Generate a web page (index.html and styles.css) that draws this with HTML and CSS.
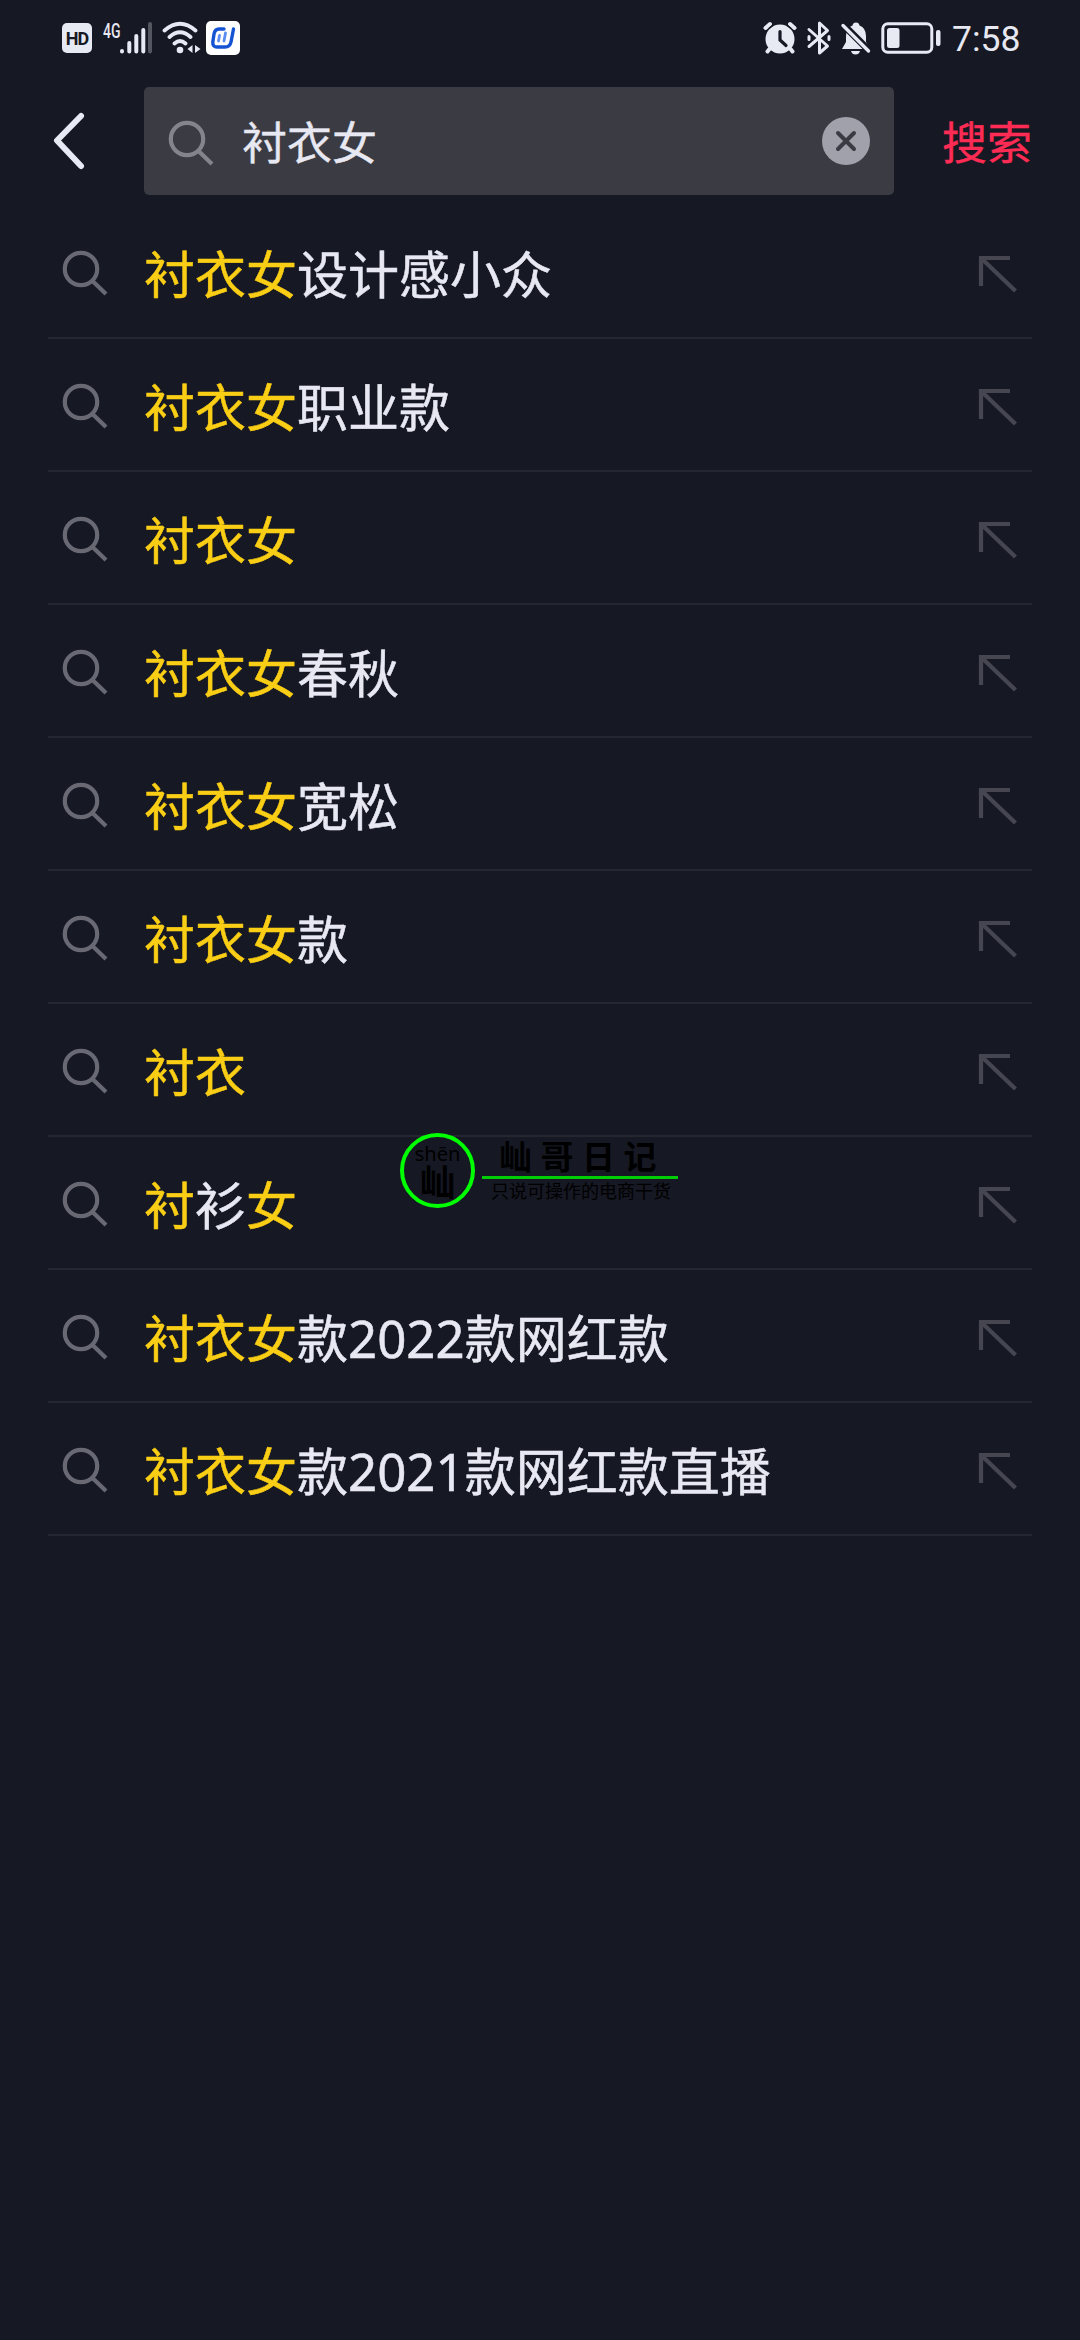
FILE: index.html
```html
<!DOCTYPE html>
<html lang="zh-CN">
<head>
<meta charset="utf-8">
<title>搜索</title>
<link rel="stylesheet" href="styles.css">
</head>
<body>
<svg class="defs" aria-hidden="true">
  <symbol id="search" viewBox="0 0 48 48"><circle cx="20" cy="20" r="16.2"/><path d="M31 31.5 45 45"/></symbol>
  <symbol id="fill" viewBox="0 0 40 40"><path d="M4 33V5H33M5 6 38.500 38"/></symbol>
</svg>
<div class="screen">
  <header class="status">
    <div class="status-left">
      <span class="hd">HD</span>
      <span class="net">4G</span>
      <svg class="signal" width="32" height="34" viewBox="0 0 32 34"><path d="M2 30v.5M9.300 22v8.500M16.300 15v15.500M23.300 9v21.500"/><path class="dim" d="M30 3v27.500"/></svg>
      <svg class="wifi" width="40" height="34" viewBox="0 0 40 34"><path d="M3.500 9.500Q19 -4 34.500 9.500M8.500 16Q19 6.500 29.500 16M13.500 22.500Q19 17.500 24.500 22.500"/><circle cx="19" cy="29" r="3.300"/><path class="solid" d="M31.500 24v8l-5-4zM34 24v8l5.500-4z"/></svg>
      <svg class="app" width="34" height="34" viewBox="0 0 34 34"><rect width="34" height="34" rx="5" fill="#fff"/><g fill="none" stroke="#1453d2" stroke-width="3.400" stroke-linecap="round"><path d="M18 8h-5Q9 8 8 13L6.800 21Q6.500 26 11 26h8Q24 26 25 21L27.500 8"/><path stroke="#5b8df0" stroke-width="2.800" d="M13.500 14.500 12.500 20M19.500 12 18 20"/></g></svg>
    </div>
    <div class="status-right">
      <svg width="34" height="34" viewBox="0 0 34 34"><circle cx="17" cy="18" r="14.500" fill="#e7e9f3"/><g fill="none" stroke="#e7e9f3" stroke-width="4" stroke-linecap="round"><path d="M2.500 7 7 3M27 3l4.500 4M6.500 28 4.500 30.500M27.500 28l2 2.500"/></g><path d="M6 7.500 9.500 4.500M24.500 4.500 28 7.500" fill="none" stroke="#161823" stroke-width="1.500"/><path d="M17 10.500V19l6 5.500" fill="none" stroke="#161823" stroke-width="3.200" stroke-linecap="round"/></svg>
      <svg class="bt" width="26" height="36" viewBox="0 0 26 36"><path d="M3 9.500 21.500 26 13.500 33V3L21.500 10.500 3 26.500M3 16.500v3M23 16.500v3"/></svg>
      <svg class="bell" width="32" height="34" viewBox="0 0 32 34"><path fill="#e7e9f3" d="M16 1.500q3 0 3.500 3Q26 7 26 15v6l3 5v2H2l4-7v-6Q6 7 12.500 4.500q.5-3 3.500-3zM11 30h9q-1 3.500-4.500 3.500T11 30z"/><path d="M2 2.500 31 31.500" stroke="#161823" stroke-width="7"/><path d="M3 4.500 28.500 30" stroke="#e7e9f3" stroke-width="3.400" stroke-linecap="round"/></svg>
      <svg class="battery" width="60" height="32" viewBox="0 0 60 32"><rect x="1.800" y="1.800" width="49" height="28.400" rx="5" fill="none" stroke="#e7e9f3" stroke-width="3"/><rect x="6" y="6" width="12.500" height="20" rx="2.500" fill="#e7e9f3"/><rect x="55" y="8" width="4.500" height="16" rx="2" fill="#e7e9f3"/></svg>
      <span class="time">7:58</span>
    </div>
  </header>
  <div class="bar">
    <svg class="back" width="36" height="60" viewBox="0 0 36 60"><path d="M30 5 6 29.500 30 55"/></svg>
    <div class="field">
      <svg class="icon"><use href="#search"/></svg>
      <span class="query">衬衣女</span>
      <svg class="clear" width="48" height="48" viewBox="0 0 48 48"><circle cx="24" cy="24" r="24"/><path d="M16 16 32 32M32 16 16 32"/></svg>
    </div>
    <span class="submit">搜索</span>
  </div>
  <ul class="list">
    <li><svg class="icon"><use href="#search"/></svg><span class="word"><b>衬衣女</b>设计感小众</span><svg class="arrow"><use href="#fill"/></svg></li>
    <li><svg class="icon"><use href="#search"/></svg><span class="word"><b>衬衣女</b>职业款</span><svg class="arrow"><use href="#fill"/></svg></li>
    <li><svg class="icon"><use href="#search"/></svg><span class="word"><b>衬衣女</b></span><svg class="arrow"><use href="#fill"/></svg></li>
    <li><svg class="icon"><use href="#search"/></svg><span class="word"><b>衬衣女</b>春秋</span><svg class="arrow"><use href="#fill"/></svg></li>
    <li><svg class="icon"><use href="#search"/></svg><span class="word"><b>衬衣女</b>宽松</span><svg class="arrow"><use href="#fill"/></svg></li>
    <li><svg class="icon"><use href="#search"/></svg><span class="word"><b>衬衣女</b>款</span><svg class="arrow"><use href="#fill"/></svg></li>
    <li><svg class="icon"><use href="#search"/></svg><span class="word"><b>衬衣</b></span><svg class="arrow"><use href="#fill"/></svg></li>
    <li><svg class="icon"><use href="#search"/></svg><span class="word"><b>衬</b>衫<b>女</b></span><svg class="arrow"><use href="#fill"/></svg></li>
    <li><svg class="icon"><use href="#search"/></svg><span class="word"><b>衬衣女</b>款2022款网红款</span><svg class="arrow"><use href="#fill"/></svg></li>
    <li><svg class="icon"><use href="#search"/></svg><span class="word"><b>衬衣女</b>款2021款网红款直播</span><svg class="arrow"><use href="#fill"/></svg></li>
  </ul>
  <div class="watermark">
    <div class="seal"><span class="pinyin">shēn</span><span class="glyph">屾</span></div>
    <div class="brand"><span class="name">屾哥日记</span><span class="motto">只说可操作的电商干货</span></div>
  </div>
</div>
</body>
</html>
```
FILE: styles.css
```css
* { box-sizing: border-box; }
body { margin: 0; background: #161823; }
.defs { position: absolute; width: 0; height: 0; }
svg { display: block; flex: none; }
.screen {
  position: relative;
  width: 1080px;
  height: 2340px;
  overflow: hidden;
  background: #161823;
  color: #e7e8f1;
  font-family: "Noto Sans", "Noto Sans CJK SC", sans-serif;
}

.status {
  display: flex;
  justify-content: space-between;
  height: 87px;
  padding: 20px 60px 0 62px;
}
.status-left, .status-right { display: flex; align-items: center; height: 36px; }
.hd {
  width: 30px;
  height: 30px;
  border-radius: 5px;
  background: #e7e9f3;
  color: #161823;
  font: 700 18px/31px Roboto, sans-serif;
  letter-spacing: -1px;
  text-align: center;
}
.net {
  width: 17px;
  height: 34px;
  margin-left: 11px;
  font: 500 20px/20px Roboto, sans-serif;
  transform: scaleX(0.7);
  transform-origin: left;
}
.signal { fill: none; stroke: #e7e9f3; stroke-width: 4; stroke-linecap: round; }
.signal .dim { stroke: #54565f; }
.wifi { margin-left: 9px; fill: none; stroke: #e7e9f3; stroke-width: 3.8; stroke-linecap: round; }
.wifi circle, .wifi .solid { fill: #e7e9f3; stroke: none; }
.app { margin-left: 5px; }
.bt { margin-left: 9px; fill: none; stroke: #e7e9f3; stroke-width: 3; stroke-linejoin: round; stroke-linecap: round; }
.bell { margin-left: 8px; }
.battery { margin-left: 9px; }
.time { width: 68px; margin-left: 11px; padding-top: 2px; font: 400 35.500px/36px Roboto, sans-serif; white-space: nowrap; }

.bar { display: flex; align-items: center; height: 108px; padding-left: 51px; }
.back { fill: none; stroke: #e7e9f3; stroke-width: 6; stroke-linecap: round; stroke-linejoin: round; }
.field {
  display: flex;
  align-items: center;
  width: 750px;
  height: 108px;
  margin-left: 57px;
  padding: 0 24px 0 23px;
  border-radius: 5px;
  background: #3b3b44;
}
.icon { width: 48px; height: 48px; margin-top: 2px; fill: none; stroke: #686973; stroke-width: 4.2; }
.field .icon { margin-top: 3px; stroke: #84848c; }
.query { flex: 1; margin-left: 27px; padding-top: 3px; font-size: 45px; line-height: 60px; -webkit-text-stroke: 0.4px; }
.clear { fill: #a0a1aa; stroke: #3b3b44; stroke-width: 4; stroke-linecap: round; }
.clear circle { stroke: none; }
.submit { margin-left: 48px; padding-top: 3px; color: #fe2c55; font-size: 45px; line-height: 60px; -webkit-text-stroke: 0.4px; }

.list { margin: 11px 48px 0; padding: 0; list-style: none; }
.list li {
  display: flex;
  align-items: center;
  height: 133px;
  padding: 0 15px 0 13px;
  border-bottom: 2px solid #25262f;
}
.word { flex: 1; margin-left: 35px; padding-top: 5px; font-size: 51px; line-height: 68px; white-space: nowrap; -webkit-text-stroke: 0.5px; }
.word b { color: #face15; font-weight: 400; }
.arrow { width: 40px; height: 40px; margin-top: 2px; fill: none; stroke: #454650; stroke-width: 4.2; }

/* Channel mark laid over the suggestions */
.watermark {
  position: absolute;
  left: 400px;
  top: 1133px;
  display: flex;
  gap: 7px;
  color: #000;
}
.seal {
  display: flex;
  flex-direction: column;
  align-items: center;
  width: 75px;
  height: 75px;
  border: 4px solid #0f0;
  border-radius: 50%;
}
.pinyin { margin-top: 7px; font-size: 20px; line-height: 20px; }
.glyph { font-size: 36px; font-weight: 700; line-height: 38px; }
.brand { width: 196px; }
.name {
  display: block;
  height: 46px;
  padding-left: 17px;
  border-bottom: 3px solid #00cc05;
  font-size: 33px;
  font-weight: 700;
  line-height: 48px;
  letter-spacing: 8.500px;
  white-space: nowrap;
}
.motto { display: block; padding-left: 9px; font-size: 18px; line-height: 24px; white-space: nowrap; }
```
